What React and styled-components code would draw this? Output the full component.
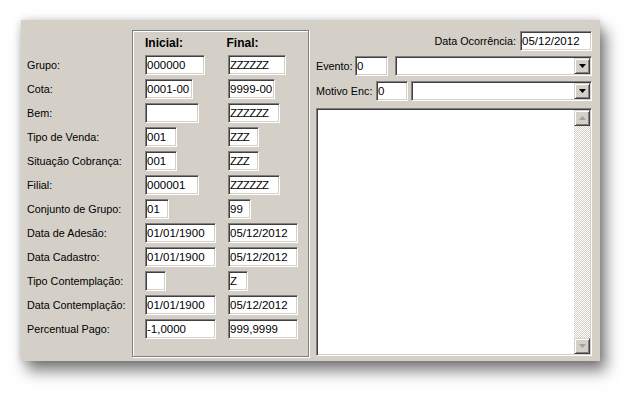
import React from 'react';
import styled, { createGlobalStyle } from 'styled-components';

const GlobalStyle = createGlobalStyle`
  html, body {
    margin: 0;
    padding: 0;
    background: #ffffff;
  }
  body {
    font-family: "Liberation Sans", Arial, sans-serif;
    font-size: 11px;
    color: #000;
  }
`

const Page = styled.div`
  padding: 20px 0 0 21px;
  width: 642px;
  height: 403px;
  box-sizing: border-box;
`

const Panel = styled.div`
  display: flex;
  width: 579px;
  height: 341px;
  box-sizing: border-box;
  padding: 10px 8px 4px 6px;
  background: #d4d0c8;
  box-shadow: 6px 10px 14px rgba(0, 0, 0, 0.5), 0 0 8px rgba(0, 0, 0, 0.18);
`

const LabelColumn = styled.div`
  width: 105px;
  padding-top: 25px;
  display: flex;
  flex-direction: column;
`

const Row = styled.div`
  display: flex;
  align-items: flex-start;
  height: 24px;
  flex-shrink: 0;
`

const Label = styled.span`
  line-height: 20px;
  white-space: nowrap;
  font-size: 10.8px;
`

const GroupBox = styled.div`
  width: 177px;
  box-sizing: border-box;
  border: 1px solid #808080;
  box-shadow: inset 1px 1px 0 #fff, 1px 1px 0 #fff;
  padding: 0 0 0 12px;
  display: flex;
  flex-direction: column;
`

const HeaderRow = styled.div`
  display: flex;
  height: 24px;
  align-items: center;
`

const Header = styled.span`
  width: 83px;
  font-weight: bold;
  font-size: 12px;
`

const Cell = styled.div`
  width: 83px;
  flex-shrink: 0;
`

const Edit = styled.div`
  width: ${({ w }) => w}px;
  height: 20px;
  box-sizing: border-box;
  background: #fff;
  border-style: solid;
  border-width: 1px;
  border-color: #808080 #fff #fff #808080;
  box-shadow: inset 1px 1px 0 #404040, inset -1px -1px 0 #d4d0c8;
  padding: 0 0 0 1px;
  font-size: 11.5px;
  line-height: 18px;
  white-space: nowrap;
  overflow: hidden;
  letter-spacing: ${({ hatch }) => (hatch ? '-0.6px' : '0')};
  flex-shrink: 0;
`

const Right = styled.div`
  flex: 1;
  margin-left: 7px;
  display: flex;
  flex-direction: column;
`

const TopRow = styled.div`
  display: flex;
  justify-content: flex-end;
  align-items: center;
  gap: 4px;
  margin-top: 1px;
`

const FieldRow = styled.div`
  display: flex;
  align-items: center;
  margin-top: 5px;
`

const FieldLabel = styled.span`
  width: ${({ w }) => (w ? `${w}px` : 'auto')};
  flex-shrink: 0;
  white-space: nowrap;
  font-size: 10.8px;
`

const Combo = styled.div`
  flex: 1;
  margin-left: ${({ gap }) => gap}px;
  height: 20px;
  box-sizing: border-box;
  background: #fff;
  border-style: solid;
  border-width: 1px;
  border-color: #808080 #fff #fff #808080;
  box-shadow: inset 1px 1px 0 #404040, inset -1px -1px 0 #d4d0c8;
  display: flex;
  justify-content: flex-end;
  padding: 1px;
`

const ArrowButton = styled.div`
  width: 16px;
  height: 16px;
  box-sizing: border-box;
  background: #d4d0c8;
  border-style: solid;
  border-width: 1px;
  border-color: #d4d0c8 #404040 #404040 #d4d0c8;
  box-shadow: inset 1px 1px 0 #fff, inset -1px -1px 0 #808080;
  display: flex;
  align-items: center;
  justify-content: center;
  flex-shrink: 0;
`

const Memo = styled.div`
  flex: 1;
  margin: 7px 0 1px 0;
  box-sizing: border-box;
  background: #fff;
  border-style: solid;
  border-width: 1px;
  border-color: #808080 #fff #fff #808080;
  box-shadow: inset 1px 1px 0 #404040, inset -1px -1px 0 #d4d0c8;
  padding: 1px;
  display: flex;
  justify-content: flex-end;
`

const ScrollBar = styled.div`
  width: 16px;
  display: flex;
  flex-direction: column;
`

const Track = styled.div`
  flex: 1;
  background-color: #fff;
  background-image: repeating-conic-gradient(#d4d0c8 0 25%, #fff 0 50%);
  background-size: 2px 2px;
`

const Triangle = ({ up, color = '#000' }) => (
  <svg width="7" height="4" viewBox="0 0 7 4">
    {up
      ? <polygon points="0,4 7,4 3.5,0" fill={color} />
      : <polygon points="0,0 7,0 3.5,4" fill={color} />}
  </svg>
)

const rows = [
  { label: 'Grupo:', ini: '000000', iw: 60, fin: 'ZZZZZZ', fw: 58 },
  { label: 'Cota:', ini: '0001-00', iw: 48, fin: '9999-00', fw: 47 },
  { label: 'Bem:', ini: '', iw: 54, fin: 'ZZZZZZ', fw: 52 },
  { label: 'Tipo de Venda:', ini: '001', iw: 32, fin: 'ZZZ', fw: 31 },
  { label: 'Situação Cobrança:', ini: '001', iw: 32, fin: 'ZZZ', fw: 31 },
  { label: 'Filial:', ini: '000001', iw: 54, fin: 'ZZZZZZ', fw: 52 },
  { label: 'Conjunto de Grupo:', ini: '01', iw: 24, fin: '99', fw: 23 },
  { label: 'Data de Adesão:', ini: '01/01/1900', iw: 71, fin: '05/12/2012', fw: 70 },
  { label: 'Data Cadastro:', ini: '01/01/1900', iw: 71, fin: '05/12/2012', fw: 70 },
  { label: 'Tipo Contemplação:', ini: '', iw: 21, fin: 'Z', fw: 20 },
  { label: 'Data Contemplação:', ini: '01/01/1900', iw: 71, fin: '05/12/2012', fw: 70 },
  { label: 'Percentual Pago:', ini: '-1,0000', iw: 71, fin: '999,9999', fw: 70 },
]

const App = () => {
  return (
    <Page>
      <GlobalStyle />
      <Panel>
        <LabelColumn>
          {rows.map((r, i) => (
            <Row key={i}>
              <Label>{r.label}</Label>
            </Row>
          ))}
        </LabelColumn>
        <GroupBox>
          <HeaderRow>
            <Header>Inicial:</Header>
            <Header>Final:</Header>
          </HeaderRow>
          {rows.map((r, i) => (
            <Row key={i}>
              <Cell>
                <Edit w={r.iw}>{r.ini}</Edit>
              </Cell>
              <Cell>
                <Edit w={r.fw} hatch={r.fin.startsWith('ZZ')}>{r.fin}</Edit>
              </Cell>
            </Row>
          ))}
        </GroupBox>
        <Right>
          <TopRow>
            <FieldLabel>Data Ocorrência:</FieldLabel>
            <Edit w={72}>05/12/2012</Edit>
          </TopRow>
          <FieldRow>
            <FieldLabel w={39}>Evento:</FieldLabel>
            <Edit w={33}>0</Edit>
            <Combo gap={7}>
              <ArrowButton><Triangle /></ArrowButton>
            </Combo>
          </FieldRow>
          <FieldRow>
            <FieldLabel w={60}>Motivo Enc:</FieldLabel>
            <Edit w={32}>0</Edit>
            <Combo gap={3}>
              <ArrowButton><Triangle /></ArrowButton>
            </Combo>
          </FieldRow>
          <Memo>
            <ScrollBar>
              <ArrowButton><Triangle up color="#a0a0a0" /></ArrowButton>
              <Track />
              <ArrowButton><Triangle color="#a0a0a0" /></ArrowButton>
            </ScrollBar>
          </Memo>
        </Right>
      </Panel>
    </Page>
  );
}

export default App;
